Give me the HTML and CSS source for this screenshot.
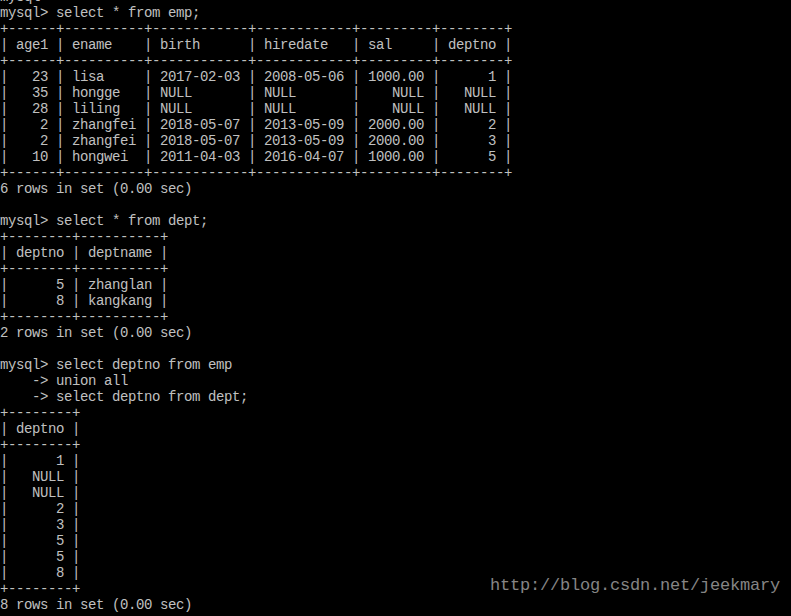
FILE: index.html
```html
<!DOCTYPE html>
<html lang="en">
<head>
    <meta charset="UTF-8">
    <meta name="viewport" content="width=device-width, initial-scale=1.0">
    <title>mysql</title>
    <link rel="stylesheet" href="styles.css">
</head>
<body>
    <div class="console">
<pre class="screen">mysql&gt;
mysql&gt; select * from emp;
+------+----------+------------+------------+---------+--------+
| age1 | ename    | birth      | hiredate   | sal     | deptno |
+------+----------+------------+------------+---------+--------+
|   23 | lisa     | 2017-02-03 | 2008-05-06 | 1000.00 |      1 |
|   35 | hongge   | NULL       | NULL       |    NULL |   NULL |
|   28 | liling   | NULL       | NULL       |    NULL |   NULL |
|    2 | zhangfei | 2018-05-07 | 2013-05-09 | 2000.00 |      2 |
|    2 | zhangfei | 2018-05-07 | 2013-05-09 | 2000.00 |      3 |
|   10 | hongwei  | 2011-04-03 | 2016-04-07 | 1000.00 |      5 |
+------+----------+------------+------------+---------+--------+
6 rows in set (0.00 sec)

mysql&gt; select * from dept;
+--------+----------+
| deptno | deptname |
+--------+----------+
|      5 | zhanglan |
|      8 | kangkang |
+--------+----------+
2 rows in set (0.00 sec)

mysql&gt; select deptno from emp
    -&gt; union all
    -&gt; select deptno from dept;
+--------+
| deptno |
+--------+
|      1 |
|   NULL |
|   NULL |
|      2 |
|      3 |
|      5 |
|      5 |
|      8 |
+--------+
8 rows in set (0.00 sec)</pre>
        <span class="mark">http://blog.csdn.net/jeekmary</span>
    </div>
</body>
</html>
```

FILE: styles.css
```css
* {
    margin: 0;
    padding: 0;
}

html, body {
    background-color: #000;
    height: 100%;
    overflow: hidden;
}

.console {
    position: relative;
    width: 791px;
    height: 616px;
}

.screen {
    margin-top: -11px;
    font-family: "Liberation Mono", monospace;
    font-size: 14px;
    letter-spacing: -0.4px;
    line-height: 16px;
    color: #c0c0c0;
}

/* blog watermark sits over the console */
.mark {
    position: absolute;
    left: 490px;
    top: 587px;
    font-family: "Liberation Mono", monospace;
    font-size: 17px;
    letter-spacing: -0.2px;
    line-height: 20px;
    color: #858585;
}
```
